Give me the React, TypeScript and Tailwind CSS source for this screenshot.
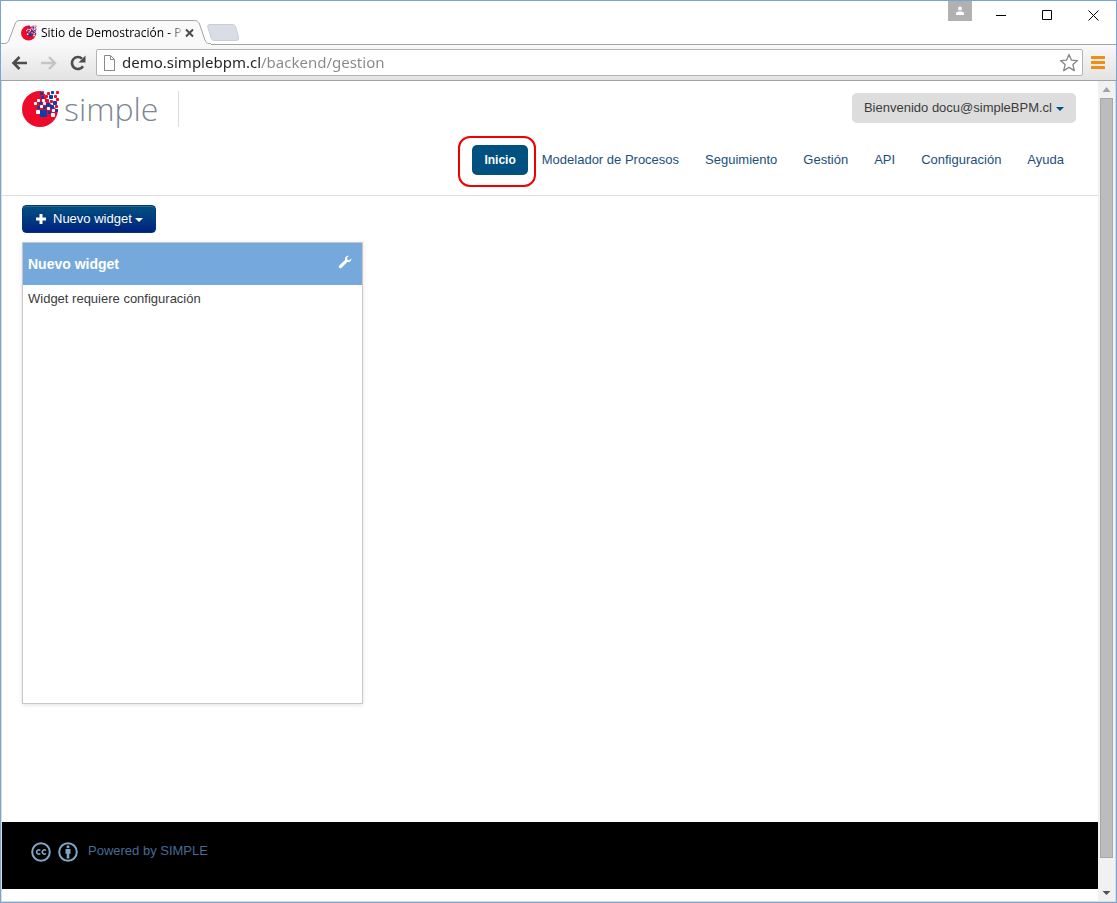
import { useState } from "react";
import { clsx } from "clsx";

const NAV_ITEMS = [
  "Inicio",
  "Modelador de Procesos",
  "Seguimiento",
  "Gestión",
  "API",
  "Configuración",
  "Ayuda",
];

// x, y, size, color
const LOGO_DOTS: [number, number, number, string][] = [
  [18, 1, 3, "#0a3fa8"],
  [22, 0, 3, "#ffffff"],
  [25, 1, 3, "#ee0a2b"],
  [29, 0, 3, "#0a3fa8"],
  [34, 0, 3, "#ee0a2b"],
  [19, 5, 3, "#0a3fa8"],
  [23, 4, 3, "#ee0a2b"],
  [27, 4, 4, "#0a3fa8"],
  [32, 4, 3, "#ee0a2b"],
  [15, 8, 3, "#ffffff"],
  [20, 8, 3, "#ffffff"],
  [24, 8, 3, "#ee0a2b"],
  [28, 9, 3, "#ee0a2b"],
  [34, 7, 3, "#ee0a2b"],
  [12, 11, 3, "#ffffff"],
  [17, 11, 3, "#0a3fa8"],
  [21, 11, 3, "#ffffff"],
  [24, 12, 4, "#0a3fa8"],
  [31, 10, 4, "#0a3fa8"],
  [15, 15, 3, "#0a3fa8"],
  [18, 14, 3, "#ffffff"],
  [21, 15, 3, "#0a3fa8"],
  [25, 16, 3, "#ffffff"],
  [28, 14, 4, "#0a3fa8"],
  [33, 14, 3, "#ee0a2b"],
  [30, 18, 3, "#ffffff"],
  [33, 18, 3, "#0a3fa8"],
  [14, 19, 4, "#ffffff"],
  [18, 19, 7, "#0a3fa8"],
  [26, 20, 3, "#0a3fa8"],
  [29, 22, 4, "#ffffff"],
];

export default function App() {
  return (
    <div className="flex min-h-screen flex-col border border-[#7ba3d3] bg-white font-['Liberation_Sans',Arial,sans-serif] text-[13px] leading-5 text-[#3c3c3c]">
      <TabStrip />
      <Toolbar />
      <div className="flex grow border-r border-b border-l border-[#dcdcdc]">
        <div className="flex min-w-0 grow flex-col">
          <SiteHeader />
          <main className="grow px-5 pt-[9px]">
            <button
              type="button"
              className="flex h-7 items-center rounded border border-[#003a73] bg-linear-to-b from-[#005080] to-[#002080] px-3 text-white shadow-[inset_0_1px_0_rgba(255,255,255,0.15)] [text-shadow:0_-1px_0_rgba(0,0,0,0.25)]"
            >
              <svg viewBox="0 0 12 12" className="mr-1.5 size-3" fill="#fff" aria-hidden="true">
                <path d="M4.5 1h3v3.5H11v3H7.500V11h-3V7.500H1v-3h3.500z" />
              </svg>
              Nuevo widget
              <Caret className="ml-[3px] text-white" />
            </button>
            <Widget />
          </main>
          <SiteFooter />
        </div>
        <Scrollbar />
      </div>
    </div>
  );
}

function TabStrip() {
  return (
    <div className="flex h-[43px] items-start justify-between">
      <div className="flex self-end">
        <div className="relative z-10 flex h-6 w-[210px] items-center pt-px">
          <svg
            viewBox="0 0 210 25"
            className="absolute top-0 left-0 h-[25px] w-[210px]"
            aria-hidden="true"
          >
            <path
              d="M0 23.5h3c3 0 4-1 5-3.500l6-16c1-2.500 2-3.500 4.500-3.500h175c2.500 0 4 1 5 3.500l5.500 16c1 2.500 2 3.500 4.500 3.500h1.500V25H0z"
              fill="#f9f9f9"
            />
            <path
              d="M0 23.500h3c3 0 4-1 5-3.500l6-16c1-2.500 2-3.500 4.500-3.500h175c2.500 0 4 1 5 3.500l5.500 16c1 2.500 2 3.500 4.500 3.500h1.500"
              fill="none"
              stroke="#a3a3a3"
            />
          </svg>
          <LogoMark className="relative ml-5 size-4" />
          <span className="relative ml-1 w-[142px] bg-linear-to-r from-black from-88% to-[#ddd] bg-clip-text font-['Open_Sans',sans-serif] text-xs whitespace-nowrap text-transparent">
            Sitio de Demostración - P
          </span>
          <button type="button" aria-label="Cerrar pestaña" className="relative size-3">
            <svg viewBox="0 0 12 12" className="size-3" aria-hidden="true">
              <path d="M3 2.500l7 7M10 2.500l-7 7" stroke="#4a4a4a" strokeWidth="2" />
            </svg>
          </button>
        </div>
        <button type="button" aria-label="Nueva pestaña" className="mt-1 -ml-1 h-[18px] w-8">
          <svg viewBox="0 0 32 18" className="h-[18px] w-8" aria-hidden="true">
            <path
              d="M3 .5h22c2 0 3 .5 3.600 2l3 11c.5 2-.3 3-2 3H8c-2 0-3-.5-3.600-2l-3.500-11C.3 1.500 1 .5 3 .5z"
              fill="#d9dde5"
              stroke="#c9cdd4"
            />
          </svg>
        </button>
      </div>

      <div className="flex">
        <button
          type="button"
          aria-label="Perfil"
          className="mr-[6px] flex h-5 w-6 items-center justify-center bg-[#b1b1b1]"
        >
          <svg viewBox="0 0 10 10" className="size-[10px]" fill="#fff" aria-hidden="true">
            <circle cx="5" cy="2.500" r="2" />
            <path d="M1 9V7.500c0-1.500 1.500-2 4-2s4 .5 4 2V9z" />
          </svg>
        </button>
        <WindowButton label="Minimizar" d="M0 5.500h10" />
        <WindowButton label="Maximizar" d="M.5.5h9v9h-9z" />
        <WindowButton label="Cerrar" d="M.5.5l10 10M10.500.5l-10 10" />
      </div>
    </div>
  );
}

function WindowButton({ label, d }: { label: string; d: string }) {
  return (
    <button type="button" aria-label={label} className="flex h-7 w-[46px] items-center justify-center">
      <svg viewBox="0 0 11 11" className="size-[11px]" fill="none" stroke="#000" aria-hidden="true">
        <path d={d} />
      </svg>
    </button>
  );
}

function Toolbar() {
  return (
    <div className="flex h-[37px] items-center border-t border-b border-[#a3a3a3] bg-linear-to-b from-[#f9f9f9] to-[#e3e3e3] pr-[11px] pl-[10px]">
      <button type="button" aria-label="Atrás">
        <svg viewBox="0 0 18 16" className="h-4 w-[18px]" fill="none" stroke="#4d4d4d" strokeWidth="2.600" aria-hidden="true">
          <path d="M16 8H3M8.500 2L2.500 8l6 6" />
        </svg>
      </button>
      <button type="button" aria-label="Adelante" className="ml-[11px]">
        <svg viewBox="0 0 18 16" className="h-4 w-[18px]" fill="none" stroke="#c4c4c4" strokeWidth="2.400" aria-hidden="true">
          <path d="M1 8h13M9 2l6 6-6 6" />
        </svg>
      </button>
      <button type="button" aria-label="Recargar" className="ml-3">
        <svg viewBox="0 0 16 16" className="size-4" aria-hidden="true">
          <path d="M13 11.200A6 6 0 1 1 12 3.600" fill="none" stroke="#4d4d4d" strokeWidth="2.600" />
          <path d="M15.500.5v7H8.500z" fill="#4d4d4d" />
        </svg>
      </button>
      <div className="ml-[10px] flex h-[27px] grow items-center rounded-xs border border-[#b3b3b3] bg-white pr-[3px] pl-[6px]">
        <svg viewBox="0 0 13 16" className="h-4 w-[13px] shrink-0" fill="#fff" stroke="#8a8a8a" aria-hidden="true">
          <path d="M1.500.5h6l4 4v14h-10zM7.500.5v4h4M1.500 15.500h10" />
        </svg>
        <input
          type="text"
          aria-label="Dirección"
          defaultValue="demo.simplebpm.cl/backend/gestion"
          className="ml-[6px] h-6 min-w-0 grow bg-linear-to-r from-[#222] from-[139px] to-[#888] to-[139px] bg-clip-text pb-0.5 font-['Noto_Sans',sans-serif] text-[15px] text-transparent outline-none"
        />
        <button type="button" aria-label="Añadir a marcadores">
          <svg viewBox="0 0 20 20" className="size-5" fill="#fff" stroke="#858585" strokeWidth="1.300" strokeLinejoin="round" aria-hidden="true">
            <path d="M10 1.500l2.400 5.600 6.100.5-4.600 4 1.400 6-5.300-3.200-5.300 3.200 1.400-6-4.600-4 6.100-.5z" />
          </svg>
        </button>
      </div>
      <button type="button" aria-label="Menú" className="ml-2">
        <svg viewBox="0 0 14 14" className="size-[14px]" fill="#f28c13" aria-hidden="true">
          <rect y="0" width="14" height="3" rx=".5" />
          <rect y="5" width="14" height="3" rx=".5" />
          <rect y="10" width="14" height="3" rx=".5" />
        </svg>
      </button>
    </div>
  );
}

function SiteHeader() {
  const [active, setActive] = useState("Inicio");

  return (
    <header className="border-b border-[#ddd] pt-[10px] pr-[22px] pb-5 pl-5">
      <div className="flex h-11 items-start justify-between">
        <a href="#" aria-label="simple" className="flex h-9 items-center border-r border-[#ddd] pr-5">
          <LogoMark className="size-[38px]" />
          <span className="ml-1 font-['Open_Sans',sans-serif] text-[32px] leading-8 font-light text-[#7d8695]">
            simple
          </span>
        </a>
        <button
          type="button"
          className="mt-0.5 flex h-[30px] items-center rounded-[5px] bg-[#ddd] px-3"
        >
          Bienvenido docu@simpleBPM.cl
          <Caret className="ml-1 text-[#005580]" />
        </button>
      </div>
      <nav className="mt-[10px] flex justify-end gap-0.5">
        {NAV_ITEMS.map((item) => (
          <a
            key={item}
            href="#"
            onClick={() => setActive(item)}
            className={clsx(
              "relative rounded-[5px] px-3 py-[5px]",
              item === active ? "bg-[#005080] text-xs leading-5 font-bold text-white" : "text-[#1a4f7c]",
            )}
          >
            {item}
            {item === active ? (
              <span className="pointer-events-none absolute -top-[9px] -right-2 -bottom-3 -left-[14px] rounded-xl border-2 border-[#f00000]" />
            ) : null}
          </a>
        ))}
      </nav>
    </header>
  );
}

function Widget() {
  return (
    <section className="mt-[9px] min-h-[462px] w-[341px] border border-[#c8c8c8] bg-white shadow-[0_1px_4px_rgba(0,0,0,0.12)]">
      <div className="flex h-[42px] items-center justify-between bg-[#76a9db] pr-[10px] pl-[5px]">
        <h2 className="text-sm font-bold text-white">Nuevo widget</h2>
        <button type="button" aria-label="Configurar widget" className="pb-1">
          <svg viewBox="0 0 14 14" className="size-[14px]" fill="#fff" aria-hidden="true">
            <path d="M13.300 3.600c.3 2.400-1.600 4-4 3.400L3.600 12.700c-.8.8-1.800.7-2.400.1-.6-.6-.6-1.600.1-2.300L7.100 5C6.500 2.600 8.300.6 11 .8L8.900 2.900l.4 1.900 1.900.4z" />
          </svg>
        </button>
      </div>
      <p className="px-[5px] py-1">Widget requiere configuración</p>
    </section>
  );
}

function SiteFooter() {
  return (
    <footer className="mb-3 flex h-[67px] items-start bg-black px-[29px] pt-5 text-[#466b94]">
      <svg viewBox="0 0 20 20" className="size-5" aria-hidden="true">
        <circle cx="10" cy="10" r="8.800" fill="none" stroke="#7fa6c6" strokeWidth="2" />
        <path
          d="M9.300 8.500a2.100 2.100 0 1 0 0 3M14.900 8.500a2.100 2.100 0 1 0 0 3"
          fill="none"
          stroke="#7fa6c6"
          strokeWidth="1.600"
        />
      </svg>
      <svg viewBox="0 0 20 20" className="ml-[7px] size-5" aria-hidden="true">
        <circle cx="10" cy="10" r="8.800" fill="none" stroke="#7fa6c6" strokeWidth="2" />
        <circle cx="10" cy="4.800" r="1.500" fill="#7fa6c6" />
        <path d="M7.500 7h5v4.800h-1.200V16.500H8.700v-4.700H7.500z" fill="#7fa6c6" />
      </svg>
      <a href="#" className="-mt-px ml-[10px]">
        Powered by SIMPLE
      </a>
    </footer>
  );
}

function Scrollbar() {
  return (
    <div className="flex w-[17px] shrink-0 flex-col items-center bg-[#f1f1f1]" aria-hidden="true">
      <svg viewBox="0 0 17 17" className="size-[17px] shrink-0">
        <path d="M8.500 6l4 5h-8z" fill="#a3a3a3" />
      </svg>
      <div className="w-[13px] grow border border-[#a8a8a8] bg-[#bcbcbc]" />
      <svg viewBox="0 0 17 17" className="mt-[26px] size-[17px] shrink-0">
        <path d="M8.500 11l4-4h-8z" fill="#505050" />
      </svg>
    </div>
  );
}

function Caret({ className }: { className?: string }) {
  return (
    <svg viewBox="0 0 8 4" className={clsx("h-1 w-2 translate-y-px", className)} fill="currentColor" aria-hidden="true">
      <path d="M0 0h8L4 4z" />
    </svg>
  );
}

function LogoMark({ className }: { className?: string }) {
  return (
    <svg viewBox="0 0 38 38" className={clsx("shrink-0", className)} aria-hidden="true">
      <circle cx="18" cy="19" r="18" fill="#ee0a2b" />
      <path d="M22 0h16v19h-4l-6-6-4-5z" fill="#fff" />
      {LOGO_DOTS.map(([x, y, size, fill]) => (
        <rect
          key={`${x}-${y}`}
          x={x}
          y={y + 1}
          width={size}
          height={size}
          rx={size < 7 ? 0.8 : 0}
          fill={fill}
        />
      ))}
    </svg>
  );
}
